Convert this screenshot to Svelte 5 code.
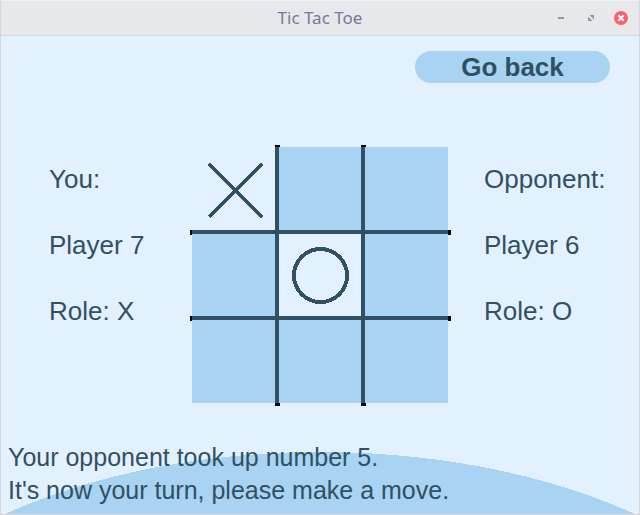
<script>
  const players = [
    { side: 'own', heading: 'You:', name: 'Player 7', role: 'X' },
    { side: 'opponent', heading: 'Opponent:', name: 'Player 6', role: 'O' }
  ];
  let cells = $state(['X', '', '', '', 'O', '', '', '', '']);

  function play(index) {
    if (!cells[index]) cells[index] = 'X';
  }
</script>

{#snippet playerInfo(player)}
  <section class="player {player.side}">
    <p>{player.heading}</p>
    <p>{player.name}</p>
    <p>Role: {player.role}</p>
  </section>
{/snippet}

<div class="window">
  <header class="titlebar">
    <span class="spacer"></span>
    <h1>Tic Tac Toe</h1>
    <div class="controls">
      <button type="button" aria-label="Minimize">
        <svg width="14" height="14" viewBox="0 0 14 14"><path d="M4 6h6v2H4z" fill="#9194a6" /></svg>
      </button>
      <button type="button" aria-label="Maximize">
        <svg width="14" height="14" viewBox="0 0 14 14">
          <path d="M5.500 4H10v4.500zM4 5.500L8.500 10H4z" fill="#9194a6" />
        </svg>
      </button>
      <button type="button" aria-label="Close">
        <svg width="14" height="14" viewBox="0 0 14 14">
          <circle cx="7" cy="7" r="7" fill="#f9606a" />
          <path d="M4.300 4.300l5.400 5.400M9.700 4.300L4.300 9.700" stroke="#fff" stroke-width="2" />
        </svg>
      </button>
    </div>
  </header>

  <main>
    <svg class="hill" viewBox="0 0 638 62" preserveAspectRatio="none" aria-hidden="true">
      <ellipse cx="319" cy="265" rx="490" ry="265" fill="#a8d3f2" shape-rendering="crispEdges" />
    </svg>

    <nav><button type="button" class="back">Go back</button></nav>

    <div class="game">
      {@render playerInfo(players[0])}
      <div class="board">
        {#each cells as mark, i}
          <button
            type="button"
            class="cell"
            class:taken={mark}
            aria-label="Number {i + 1} {mark}"
            onclick={() => play(i)}
          >
            {#if mark}
              <svg width="58" height="58" viewBox="0 0 58 58" shape-rendering="crispEdges">
                {#if mark === 'X'}
                  <path d="M4 4l53 53M57 4L4 57" stroke="#305064" stroke-width="4" />
                {:else}
                  <circle cx="29.5" cy="29.5" r="26.5" fill="none" stroke="#305064" stroke-width="4" />
                {/if}
              </svg>
            {/if}
          </button>
        {/each}
        <svg class="caps" width="256" height="256" viewBox="0 0 256 256" aria-hidden="true">
          <path
            d="M83-2h5v2h-5zM169-2h5v2h-5zM83 256h5v3h-5zM169 256h5v3h-5zM-2 83h2v5h-2zM-2 169h2v5h-2zM256 83h3v5h-3zM256 169h3v5h-3z"
          />
        </svg>
      </div>
      {@render playerInfo(players[1])}
    </div>

    <div class="status" role="status">
      <p>Your opponent took up number 5.</p>
      <p>It's now your turn, please make a move.</p>
    </div>
  </main>
</div>

<style>
  :global(body) {
    margin: 0;
  }
  .window {
    box-sizing: border-box;
    min-height: 100vh;
    display: flex;
    flex-direction: column;
    border: 1px solid #d5d7da;
    border-top-color: #f1f2f4;
    background: #e3f1ff;
    color: #305064;
    font: 26px/33px "Liberation Sans", Arial, sans-serif;
  }
  p,
  h1 {
    margin: 0;
  }
  button {
    border: 0;
    padding: 0;
    color: inherit;
    font: inherit;
    cursor: pointer;
  }
  .titlebar {
    display: grid;
    grid-template-columns: 1fr auto 1fr;
    align-items: center;
    height: 34px;
    border-bottom: 1px solid #d5d7da;
    background: #e7e8eb;
  }
  h1 {
    color: #727a96;
    font: 17px/22px "Noto Sans", sans-serif;
  }
  .controls {
    display: flex;
    justify-content: flex-end;
    gap: 16px;
    padding-right: 11px;
  }
  .controls button {
    display: flex;
    background: none;
  }
  main {
    position: relative;
    flex: 1;
    display: flex;
    flex-direction: column;
  }
  .hill {
    position: absolute;
    left: 0;
    bottom: 0;
    width: 100%;
    height: 62px;
  }
  nav {
    display: flex;
    justify-content: flex-end;
    padding: 15px 29px 0;
  }
  .back {
    width: 195px;
    height: 32px;
    border-radius: 16px;
    background: #a8d3f2;
    font-weight: bold;
  }
  .game {
    display: grid;
    grid-template-columns: 1fr auto 1fr;
    margin-top: 64px;
  }
  .player {
    display: flex;
    flex-direction: column;
    gap: 33px;
    padding-top: 16px;
  }
  .own {
    padding-left: 48px;
  }
  .opponent {
    padding-left: 36px;
  }
  .board {
    position: relative;
    display: grid;
    grid-template: 83px 82px 83px / 83px 82px 83px;
    gap: 4px;
    background: #305064;
  }
  .cell {
    display: flex;
    align-items: center;
    justify-content: center;
    background: #a8d3f2;
  }
  .taken {
    background: #e3f1ff;
  }
  .caps {
    position: absolute;
    inset: 0;
    overflow: visible;
    pointer-events: none;
  }
  .status {
    position: relative;
    margin-top: auto;
    padding: 0 7px 7px;
    font-size: 25px;
  }
</style>
